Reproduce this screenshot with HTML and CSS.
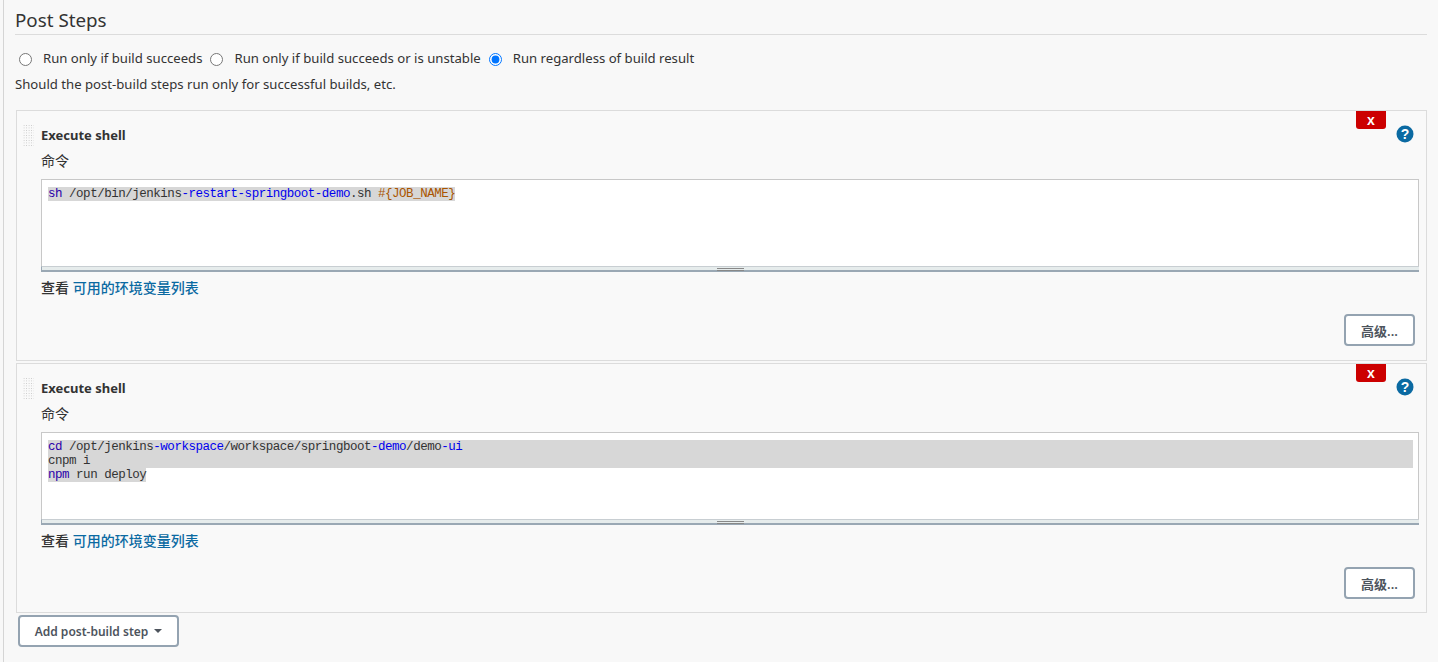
FILE: index.html
```html
<!DOCTYPE html>
<html lang="en">
<head>
<meta charset="utf-8">
<title>Post Steps</title>
<link rel="stylesheet" href="styles.css">
</head>
<body>
<main class="page">
  <h2 class="section-title">Post Steps</h2>
  <div class="radio-row">
    <label class="radio-item"><input type="radio" name="run"><span>Run only if build succeeds</span></label>
    <label class="radio-item"><input type="radio" name="run"><span>Run only if build succeeds or is unstable</span></label>
    <label class="radio-item"><input type="radio" name="run" checked><span>Run regardless of build result</span></label>
  </div>
  <p class="hint">Should the post-build steps run only for successful builds, etc.</p>

  <section class="card">
    <button class="close-btn" type="button">x</button>
    <svg class="help" viewBox="0 0 18 18" width="18" height="18"><circle cx="9" cy="9" r="8.5" fill="#0b6aa2"/><text x="9" y="13.8" text-anchor="middle" class="help-mark">?</text></svg>
    <div class="card-head"><span class="grip"></span><span class="step-name">Execute shell</span></div>
    <div class="field-label">命令</div>
    <div class="editor">
      <div class="code"><div class="line"><span class="sel"><span class="kw">sh</span> /opt/bin/jenkins<span class="def">-restart-springboot-demo</span>.sh <span class="var">#{JOB_NAME}</span></span></div></div>
      <div class="resizer"><span class="handle"></span></div>
    </div>
    <div class="env-line">查看 <a href="#">可用的环境变量列表</a></div>
    <div class="card-foot"><button class="btn" type="button">高级...</button></div>
  </section>

  <section class="card card-second">
    <button class="close-btn" type="button">x</button>
    <svg class="help" viewBox="0 0 18 18" width="18" height="18"><circle cx="9" cy="9" r="8.5" fill="#0b6aa2"/><text x="9" y="13.8" text-anchor="middle" class="help-mark">?</text></svg>
    <div class="card-head"><span class="grip"></span><span class="step-name">Execute shell</span></div>
    <div class="field-label">命令</div>
    <div class="editor">
      <div class="code">
        <div class="line full"><span class="kw">cd</span> /opt/jenkins<span class="def">-workspace</span>/workspace/springboot<span class="def">-demo</span>/demo<span class="def">-ui</span></div>
        <div class="line full">cnpm i</div>
        <div class="line"><span class="sel"><span class="kw">npm</span> run deploy</span></div>
      </div>
      <div class="resizer"><span class="handle"></span></div>
    </div>
    <div class="env-line">查看 <a href="#">可用的环境变量列表</a></div>
    <div class="card-foot"><button class="btn" type="button">高级...</button></div>
  </section>

  <div class="add-row"><button class="btn btn-add" type="button">Add post-build step<span class="caret"></span></button></div>
</main>
</body>
</html>
```
FILE: styles.css
```css
* { box-sizing: border-box; }
html, body { margin: 0; height: 100%; }
body {
  background: #f8f8f8;
  color: #333;
  font-family: "Noto Sans", "Noto Sans CJK SC", sans-serif;
  font-size: 13.15px;
  overflow: hidden;
}
.page {
  height: 662px;
  margin-left: 3px;
  border-left: 1px solid #d5d5d5;
  padding: 0 11px;
}
.section-title {
  margin: 0;
  height: 35px;
  padding-top: 7px;
  font-size: 18.8px;
  line-height: 26px;
  font-weight: 400;
  color: #333;
  border-bottom: 1px solid #dcdcdc;
}
.radio-row {
  display: flex;
  align-items: center;
  height: 24px;
  margin-top: 12px;
  padding-left: 4px;
}
.radio-item { display: flex; align-items: center; margin-right: 8px; line-height: 22px; }
.radio-item span { position: relative; top: -1px; }
.radio-item input {
  width: 13px;
  height: 13px;
  margin: 0 11px 0 0;
  accent-color: #0075ff;
}
.hint { margin: 3px 0 0; height: 22px; line-height: 20px; }
.card {
  position: relative;
  margin: 14px 0 0 1px;
  height: 251px;
  background: #f9f9f9;
  border: 1px solid #dcdcdc;
  padding: 0 7px 0 24px;
}
.card-second { margin-top: 2px; height: 250px; }
.close-btn {
  position: absolute;
  top: 0;
  right: 40px;
  width: 30px;
  height: 18px;
  padding: 0;
  border: 0;
  border-radius: 0 0 3px 3px;
  background: #cc0000;
  color: #fff;
  font: 700 14px/18px "Liberation Sans", sans-serif;
}
.help { position: absolute; top: 14px; right: 12px; }
.help-mark { fill: #fff; font: 700 14px "Liberation Sans", sans-serif; }
.card-head { position: relative; height: 49px; padding-top: 14px; }
.grip {
  position: absolute;
  left: -19px;
  top: 14px;
  width: 12px;
  height: 21px;
  background-image: conic-gradient(#c4c4c4 0 25%, transparent 0 100%);
  background-size: 2.5px 2.5px;
}
.step-name { font-weight: 700; line-height: 20px; font-size: 13px; color: #333; }
.field-label { height: 19px; margin-top: -9px; line-height: 20px; font-size: 14px; color: #333; }
.editor {
  height: 93px;
  margin-top: 9px;
  background: #fff;
  border: 1px solid #c8c8c8;
  display: flex;
  flex-direction: column;
}
.code {
  flex: 1;
  padding: 7px 5px 0 6px;
  font-family: "Liberation Mono", monospace;
  font-size: 12.5px;
  letter-spacing: -0.48px;
  line-height: 14px;
  color: #333;
}
.line { height: 14px; white-space: pre; }
.full { background: #d7d7d7; }
.sel { background: #d7d7d7; display: inline-block; height: 14px; }
.kw { color: #2a00aa; }
.def { color: #0000ee; }
.var { color: #aa5500; }
.resizer {
  height: 6px;
  background: #e6ecec;
  border-top: 1px solid #c8ced2;
  border-bottom: 2px solid #9aa8b4;
  border-left: 1px solid #9aa8b4;
  display: flex;
  justify-content: center;
  margin: 0 -1px -1px;
}
.handle {
  width: 27px;
  height: 3px;
  margin-top: 1px;
  border-top: 1px solid #888;
  border-bottom: 1px solid #888;
}
.env-line { margin-top: 6px; line-height: 20px; font-size: 14px; font-weight: 500; color: #333; }
.env-line a { color: #0b6aa2; text-decoration: none; }
.card-foot { display: flex; justify-content: flex-end; margin-top: 16px; padding-right: 4px; }
.btn {
  width: 71px;
  height: 32px;
  padding: 0;
  background: #fff;
  border: 2px solid #94a3b1;
  border-radius: 4px;
  color: #4d545d;
  font-family: "Noto Sans", "Noto Sans CJK SC", sans-serif;
  font-size: 13px;
  font-weight: 600;
}
.add-row { margin-top: 2px; padding-left: 3px; }
.btn-add { width: 161px; font-size: 12px; display: inline-flex; align-items: center; justify-content: center; }
.caret {
  margin-left: 6px;
  border-left: 4px solid transparent;
  border-right: 4px solid transparent;
  border-top: 4px solid #4d545d;
}
```
